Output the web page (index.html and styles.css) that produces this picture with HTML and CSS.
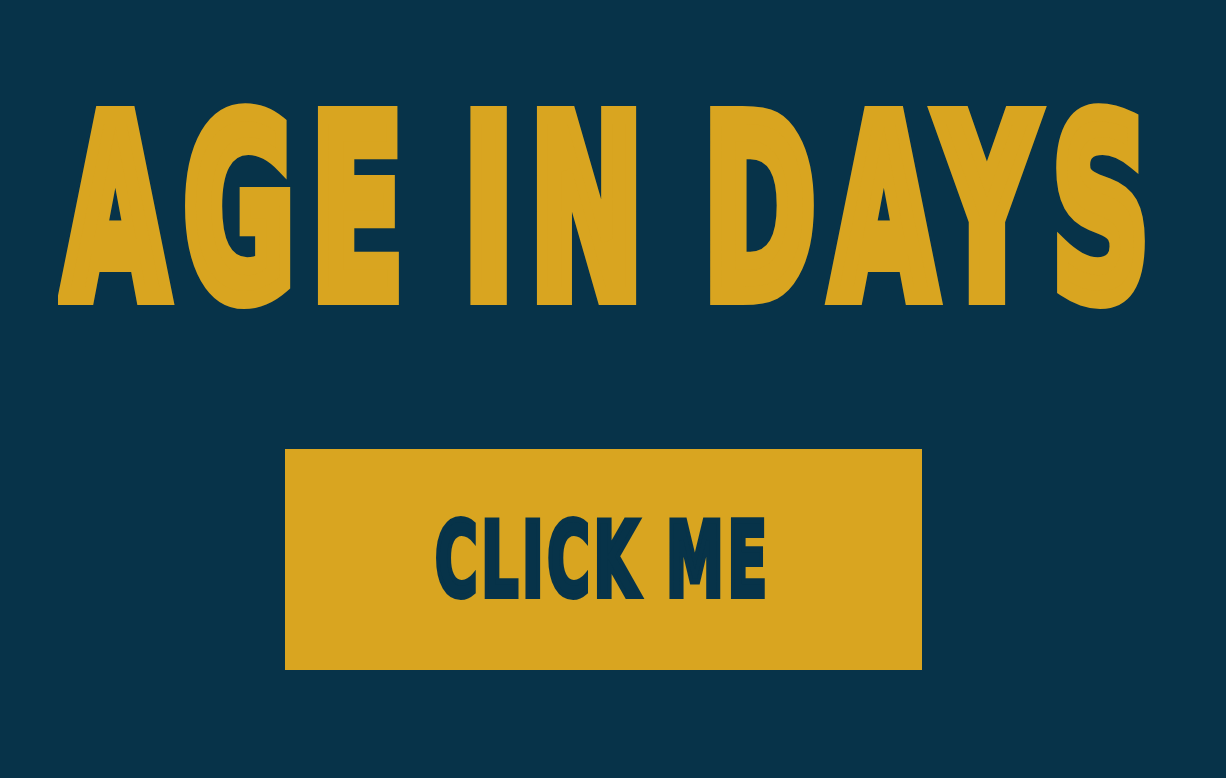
FILE: index.html
```html
<!DOCTYPE html>
<html lang="en">
<head>
<meta charset="utf-8">
<title>Age in Days</title>
<link rel="stylesheet" href="styles.css">
</head>
<body>
<main class="page">
  <h1 class="title"><span class="title-text">AGE IN DAYS</span></h1>
  <button class="cta" type="button"><span class="cta-text">CLICK ME</span></button>
</main>
</body>
</html>
```
FILE: styles.css
```css
html, body {
  margin: 0;
  padding: 0;
  background: #073349;
  overflow: hidden;
}
.page {
  height: 778px;
  display: flex;
  flex-direction: column;
  align-items: center;
  padding-right: 20px;
  box-sizing: border-box;
}
.title {
  margin: 86px 0 0 23px;
  font-family: "DejaVu Sans Condensed", "DejaVu Sans", sans-serif;
  font-weight: 700;
  font-size: 248px;
  line-height: 1;
  color: #d9a520;
  white-space: nowrap;
}
.title-text {
  display: inline-block;
  margin: 0 -360px;
  transform: scaleX(0.605);
  letter-spacing: 27px;
  word-spacing: -32px;
  -webkit-text-stroke: 18px #d9a520;
}
.cta {
  margin-top: 115px;
  width: 637px;
  height: 221px;
  border: 0;
  padding: 0;
  background: #d9a520;
  display: flex;
  align-items: center;
  justify-content: center;
  cursor: pointer;
}
.cta-text {
  display: inline-block;
  font-family: "DejaVu Sans Condensed", "DejaVu Sans", sans-serif;
  font-weight: 700;
  font-size: 104px;
  line-height: 1;
  color: #073349;
  letter-spacing: 6px;
  -webkit-text-stroke: 6px #073349;
  transform: scaleX(0.62);
  white-space: nowrap;
}
```
